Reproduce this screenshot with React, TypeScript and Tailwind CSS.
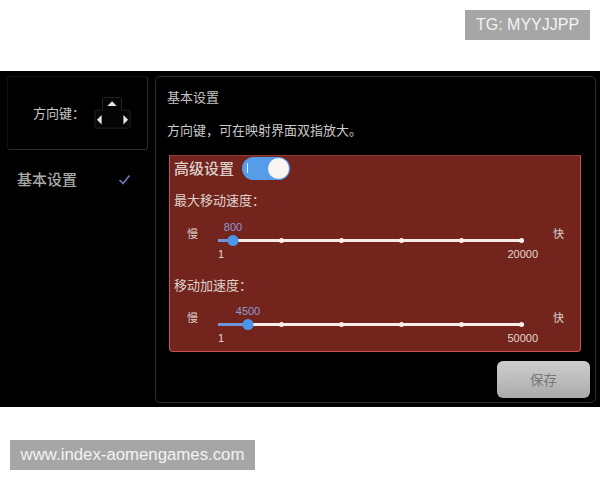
const cjk = "font-['Noto_Sans_CJK_SC','Liberation_Sans',sans-serif]";
const num = "font-['Liberation_Sans',sans-serif]";

function Slider({ value, max, fill }: { value: string; max: string; fill: number }) {
  return (
    <div className="flex h-[52px] items-start">
      <span className="mt-[4px] w-[44px] pl-[13px] text-[11px] leading-[16px] text-[#d8d0cc]">慢</span>
      <div className="relative h-full w-[306px]">
        <span
          className={`absolute top-[-1px] -translate-x-1/2 text-[11px] leading-[14px] text-[#8f9bd0] ${num}`}
          style={{ left: fill }}
        >
          {value}
        </span>
        {/* track */}
        <div className="absolute left-0 right-0 top-[18px] h-[3px] rounded-full bg-[#f7ece6]" />
        <div className="absolute left-0 top-[18px] h-[3px] rounded-full bg-[#6f95d8]" style={{ width: fill }} />
        <div className="absolute left-[61px] right-0 top-[17px] flex justify-between">
          {[0, 1, 2, 3, 4].map((i) => (
            <span key={i} className="size-[5px] rounded-full bg-[#fbf1ea]" />
          ))}
        </div>
        <span
          className="absolute top-[14px] size-[11px] -translate-x-1/2 rounded-full bg-[#4a96ea]"
          style={{ left: fill }}
        />
        <span className={`absolute left-0 top-[26px] text-[11px] leading-[14px] text-[#e4d8d2] ${num}`}>1</span>
        <span className={`absolute right-[-14px] top-[26px] text-[11px] leading-[14px] text-[#e4d8d2] ${num}`}>{max}</span>
      </div>
      <span className="ml-[29px] mt-[4px] text-[11px] leading-[16px] text-[#d8d0cc]">快</span>
    </div>
  );
}

export default function App() {
  return (
    <div className={`h-[480px] w-[600px] overflow-hidden bg-white ${cjk}`}>
      <div className="flex h-[71px] items-start justify-end pr-[10px] pt-[10px]">
        <div className="flex h-[30px] w-[125px] items-center justify-center bg-[#a6a6a6] font-['Liberation_Sans',sans-serif] text-[16px] text-[#f3f3f3]">
          TG: MYYJJPP
        </div>
      </div>

      <div className="flex h-[336px] gap-[7px] bg-black pl-[7px] pt-[5px]">
        {/* left column */}
        <div className="w-[141px]">
          <div className="flex h-[74px] items-center rounded-[3px] border border-b-[#2b2b2b] border-l-[#111111] border-r-[#2b2b2b] border-t-[#111111] pl-[25px]">
            <span className="text-[13px] text-[#c9c9c9]">方向键：</span>
            <svg width="38" height="35" viewBox="0 0 40 37" className="ml-[9px]">
              <path
                d="M10.5 1.5h17a1.5 1.5 0 0 1 1.5 1.5v12h7a2 2 0 0 1 2 2v15a2 2 0 0 1-2 2H3a2 2 0 0 1-2-2V17a2 2 0 0 1 2-2h6V3a1.5 1.5 0 0 1 1.5-1.5z"
                fill="#050505"
                stroke="#262626"
              />
              <path d="M14 10.5l5-5 5 5z" fill="#e6e6e6" />
              <path d="M8 20v10l-5-5z" fill="#e6e6e6" />
              <path d="M31 20v10l5-5z" fill="#e6e6e6" />
            </svg>
          </div>
          <div className="mt-[18px] flex items-center pl-[10px]">
            <span className="text-[15px] font-medium leading-[22px] text-[#a9a9a9]">基本设置</span>
            <svg width="13" height="11" viewBox="0 0 13 11" className="ml-[41px]">
              <path d="M1.5 6l3.5 3.5L11.5 1.5" fill="none" stroke="#6f74b8" strokeWidth="1.7" />
            </svg>
          </div>
        </div>

        {/* main panel */}
        <div className="h-[327px] w-[441px] rounded-[5px] border border-[#2e2e2e] pl-[11px] pt-[11px]">
          <div className="text-[13px] leading-[18px] text-[#c4c4c4]">基本设置</div>
          <div className="mt-[15px] text-[13px] leading-[18px] text-[#c9c9c9]">方向键，可在映射界面双指放大。</div>

          <div className="ml-[2px] mt-[16px] h-[197px] w-[412px] rounded-b-[4px] border border-[#c8524d] border-t-[#8f3a33] bg-[#72241d] pl-[4px]">
            <div className="flex h-[24px] items-center">
              <span className="text-[15px] font-medium leading-[22px] text-[#dcd0cb]">高级设置</span>
              <div className="relative ml-[8px] h-[23px] w-[48px] rounded-full bg-[#559de9]">
                <span className="absolute left-[5px] top-[6px] h-[10px] w-px bg-[#e6f0fb]" />
                <span className="absolute right-[1px] top-[1px] size-[21px] rounded-full bg-[#f8f5f2]" />
              </div>
            </div>
            <div className="mt-[11px] text-[13px] leading-[18px] text-[#ddd2cc]">最大移动速度：</div>
            <div className="mt-[12px]">
              <Slider value="800" max="20000" fill={15} />
            </div>
            <div className="mt-[3px] text-[13px] leading-[18px] text-[#ddd2cc]">移动加速度：</div>
            <div className="mt-[11px]">
              <Slider value="4500" max="50000" fill={30} />
            </div>
          </div>

          <div className="ml-[330px] mt-[9px] flex h-[37px] w-[93px] items-center justify-center rounded-[6px] bg-gradient-to-b from-[#cdcdcd] via-[#bdbdbd] to-[#a9a9a9] text-[13.5px] text-[#777777]">
            保存
          </div>
        </div>
      </div>

      <div className="ml-[10px] mt-[33px] flex h-[30px] w-[245px] items-center justify-center bg-[#a6a6a6] font-['Liberation_Sans',sans-serif] text-[16.8px] text-[#f3f3f3]">
        www.index-aomengames.com
      </div>
    </div>
  );
}
